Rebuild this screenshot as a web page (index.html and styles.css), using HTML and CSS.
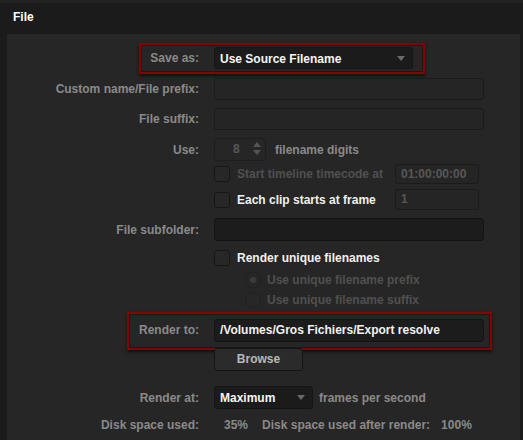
FILE: index.html
```html
<!DOCTYPE html>
<html lang="en">
<head>
    <meta charset="UTF-8">
    <title>File</title>
    <link rel="stylesheet" href="styles.css">
</head>
<body>
    <div class="header">File</div>
    <div class="panel">
        <div class="row r-save">
            <span class="mark mark-save"></span>
            <div class="label">Save as:</div>
            <div class="field">
                <div class="select select-wide">Use Source Filename<span class="arrow"></span></div>
            </div>
        </div>
        <div class="row r-custom">
            <div class="label">Custom name/File prefix:</div>
            <div class="field"><div class="input input-wide"></div></div>
        </div>
        <div class="row r-suffix">
            <div class="label">File suffix:</div>
            <div class="field"><div class="input input-wide"></div></div>
        </div>
        <div class="row r-use">
            <div class="label">Use:</div>
            <div class="field">
                <div class="spin">8<span class="spin-btn"><i class="up"></i><i class="down"></i></span></div>
                <span class="text">filename digits</span>
            </div>
        </div>
        <div class="row r-start">
            <div class="label"></div>
            <div class="field">
                <span class="check"></span>
                <span class="text dim grow">Start timeline timecode at</span>
                <div class="input input-small dimtext">01:00:00:00</div>
            </div>
        </div>
        <div class="row r-each">
            <div class="label"></div>
            <div class="field">
                <span class="check"></span>
                <span class="text white grow">Each clip starts at frame</span>
                <div class="input input-small dimtext">1</div>
            </div>
        </div>
        <div class="row r-sub">
            <div class="label">File subfolder:</div>
            <div class="field"><div class="input input-wide dark"></div></div>
        </div>
        <div class="row r-unique">
            <div class="label"></div>
            <div class="field">
                <span class="check"></span>
                <span class="text white">Render unique filenames</span>
            </div>
        </div>
        <div class="row r-radio1">
            <div class="label"></div>
            <div class="field indent">
                <span class="radio on"></span>
                <span class="text dim">Use unique filename prefix</span>
            </div>
        </div>
        <div class="row r-radio2">
            <div class="label"></div>
            <div class="field indent">
                <span class="radio"></span>
                <span class="text dim">Use unique filename suffix</span>
            </div>
        </div>
        <div class="row r-render">
            <span class="mark mark-render"></span>
            <div class="label">Render to:</div>
            <div class="field"><div class="input input-wide dark path">/Volumes/Gros Fichiers/Export resolve</div></div>
        </div>
        <div class="row r-browse">
            <div class="label"></div>
            <div class="field"><div class="button">Browse</div></div>
        </div>
        <div class="row r-at">
            <div class="label">Render at:</div>
            <div class="field">
                <div class="select select-small">Maximum<span class="arrow"></span></div>
                <span class="text">frames per second</span>
            </div>
        </div>
        <div class="row r-disk">
            <div class="label">Disk space used:</div>
            <div class="field">
                <span class="text pct">35%</span>
                <span class="text">Disk space used after render:</span>
                <span class="text pct2">100%</span>
            </div>
        </div>
    </div>
</body>
</html>
```

FILE: styles.css
```css
*{
    margin:0;
    padding:0;
    box-sizing:border-box;
}

body{
    width:523px;
    height:440px;
    overflow:hidden;
    background:#1b1b1b;
    font-family:"Liberation Sans", Arial, sans-serif;
    font-size:12px;
    font-weight:bold;
    color:#8a8a8a;
    border-top:3px solid #222;
}

.header{
    height:31px;
    line-height:29px;
    padding-left:13px;
    color:#fff;
}

.panel{
    margin-left:7px;
    margin-right:3px;
    height:406px;
    background:#262626;
    padding-top:13px;
}

.row{
    position:relative;
    display:flex;
    align-items:center;
}

.label{
    width:192px;
    flex:none;
    text-align:right;
    color:#8a8a8a;
}

.field{
    display:flex;
    align-items:center;
    margin-left:15px;
    flex:1;
}

.indent{
    margin-left:46px;
}

.mark{
    position:absolute;
    border:2px solid #8a0000;
    box-shadow:0 2px 3px rgba(0,0,0,.6), inset 0 0 0 1px rgba(0,0,0,.35);
    pointer-events:none;
}
.mark-save{
    left:132px;
    top:-4px;
    width:286px;
    height:31px;
}
.mark-render{
    left:120px;
    top:-7px;
    width:365px;
    height:38px;
}

.r-save{height:22px;}
.r-custom{height:22px;margin-top:9px;}
.r-suffix{height:22px;margin-top:8px;}
.r-use{height:23px;margin-top:8px;}
.r-start{height:20px;margin-top:3px;}
.r-each{height:21px;margin-top:5px;}
.r-sub{height:23px;margin-top:8px;}
.r-unique{height:16px;margin-top:9px;}
.r-radio1{height:16px;margin-top:6px;}
.r-radio2{height:16px;margin-top:4px;}
.r-render{height:22px;margin-top:11px;}
.r-browse{height:23px;margin-top:7px;}
.r-at{height:23px;margin-top:15px;}
.r-disk{height:16px;margin-top:8px;}

.input{
    height:22px;
    border:1px solid #1b1b1b;
    border-radius:3px;
    background:#252525;
    line-height:20px;
    padding-left:5px;
}
.input-wide{
    width:270px;
}
.r-sub .input,
.r-render .input{
    height:23px;
    line-height:21px;
}
.input-small{
    width:84px;
    height:20px;
    line-height:18px;
}
.r-each .input-small{
    height:21px;
}
.dark{
    background:#1c1c1c;
    border-color:#141414;
}
.dimtext{
    color:#575757;
}
.path{
    color:#f2f2f2;
}

.select{
    position:relative;
    height:22px;
    line-height:22px;
    background:#1b1b1b;
    border:1px solid #151515;
    border-radius:3px;
    color:#f5f5f5;
    padding-left:5px;
}
.select-wide{
    width:199px;
}
.select-small{
    width:99px;
    height:23px;
}
.arrow{
    position:absolute;
    right:7px;
    top:8px;
    border-left:4px solid transparent;
    border-right:4px solid transparent;
    border-top:5px solid #6a6a6a;
}

.spin{
    position:relative;
    width:52px;
    height:23px;
    border:1px solid #1d1d1d;
    border-radius:3px;
    line-height:21px;
    padding-left:18px;
    color:#575757;
    margin-right:9px;
}
.spin-btn{
    position:absolute;
    right:4px;
    top:3px;
    width:8px;
}
.spin-btn i{
    display:block;
    border-left:4px solid transparent;
    border-right:4px solid transparent;
}
.spin-btn .up{
    border-bottom:5px solid #555;
    margin-bottom:3px;
}
.spin-btn .down{
    border-top:5px solid #555;
}

.text{
    color:#8a8a8a;
}
.text.white{
    color:#f0f0f0;
}
.text.dim{
    color:#505050;
}
.grow{
    width:158px;
    flex:none;
}

.check{
    width:16px;
    height:16px;
    flex:none;
    border:1px solid #171717;
    border-radius:3px;
    background:#272727;
    margin-right:7px;
}
.radio{
    width:16px;
    height:16px;
    flex:none;
    border:1px solid #202020;
    border-radius:50%;
    background:#272727;
    margin-right:6px;
    position:relative;
}
.radio.on:after{
    content:"";
    position:absolute;
    left:4px;
    top:4px;
    width:6px;
    height:6px;
    border-radius:50%;
    background:#3c3c3c;
}

.button{
    width:89px;
    height:23px;
    line-height:21px;
    text-align:center;
    background:#2b2b2b;
    border:1px solid #141414;
    border-radius:3px;
    color:#b9b9b9;
}

.r-at .select{
    margin-right:6px;
}
.pct{
    margin-left:10px;
    margin-right:14px;
}
.pct2{
    margin-left:11px;
}
```
